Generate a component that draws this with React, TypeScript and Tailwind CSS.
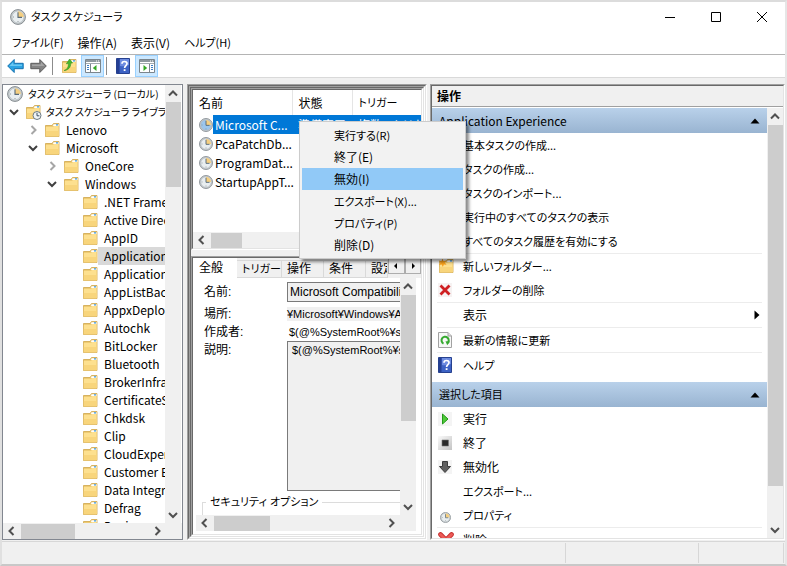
import type { ReactNode } from "react";
import clsx from "clsx";

type Direction = "up" | "down" | "left" | "right";

const chevrons: Record<Direction, string> = {
  up: "M1 6.5 5 2.5 9 6.5",
  down: "M1 3 5 7 9 3",
  left: "M6.5 1 2.5 5 6.5 9",
  right: "M3.5 1 7.5 5 3.5 9",
};

const textSize = (label: string) => (/[ぁ-ヶ]/.test(label) ? "text-[11px]" : "text-xs");

const Chevron = ({ dir, color = "#505050" }: { dir: Direction; color?: string }) => (
  <svg width="10" height="10" viewBox="0 0 10 10" fill="none" stroke={color} strokeWidth="2">
    <path d={chevrons[dir]} />
  </svg>
);

const ClockIcon = ({ size = 16, tint = "#e9eef0" }: { size?: number; tint?: string }) => (
  <svg width={size} height={size} viewBox="0 0 16 16" className="shrink-0">
    <circle cx="8" cy="8" r="7.4" fill="#c9ced1" stroke="#858c90" strokeWidth="1" />
    <circle cx="8" cy="8" r="5.9" fill={tint} stroke="#a9b2b7" strokeWidth="0.5" />
    <path d="M8 8V2.2A5.8 5.8 0 0 1 13.8 8Z" fill="#f5cf81" />
    <path d="M8 3.2V8.4H12" fill="none" stroke="#5a6b78" strokeWidth="1.1" />
    <path d="M3 8h1M8 12v1" stroke="#7d868b" strokeWidth="0.8" />
  </svg>
);

const FolderShape = () => (
  <>
    <path d="M1.5 14.5V3.5H8L9.5 1.5H15V14.5Z" fill="#e9c46a" stroke="#cfa64a" strokeWidth="0.8" />
    <path d="M9.5 2.3H14.6V4H9Z" fill="#fff" />
    <path d="M12 2.3H14V3.4H12Z" fill="#3a97dd" />
    <path d="M1.8 4.8H9L10 4.1H14.7V14.2H1.8Z" fill="#fde08f" />
    <path d="M1.8 9H14.7V14.2H1.8Z" fill="#f8d57c" />
  </>
);

const FolderIcon = () => (
  <svg width="16" height="16" viewBox="0 0 16 16" className="shrink-0">
    <FolderShape />
  </svg>
);

const ClockFolderIcon = () => (
  <svg width="16" height="16" viewBox="0 0 16 16" className="shrink-0 overflow-visible">
    <FolderShape />
    <circle cx="12" cy="11.5" r="4" fill="#eef3f5" stroke="#6c7a84" />
    <path d="M12 8.8V11.8H14.4" fill="none" stroke="#3f5263" />
  </svg>
);

const NewFolderIcon = () => (
  <svg width="16" height="16" viewBox="0 0 16 16">
    <FolderShape />
    <path
      d="M4.5.5 5.5 3 8.2 2.4 6.8 4.6 8.6 6.7 5.9 6.5 4.8 9 3.7 6.6 1 7 2.5 4.8 .8 2.6 3.5 3Z"
      fill="#f9a11b"
    />
  </svg>
);

const UpFolderIcon = () => (
  <svg width="16" height="16" viewBox="0 0 16 16">
    <FolderShape />
    <path
      d="M3 12.5C6.3 11.5 7.5 9 7.4 5.5L5.3 5.8 8.6 1 11.6 5 9.7 5.2C10 9.5 7 12.4 3 12.5Z"
      fill="#46b82e"
      stroke="#2c8a1c"
      strokeWidth="0.5"
    />
  </svg>
);

const ArrowIcon = ({ forward = false }: { forward?: boolean }) => (
  <svg width="17" height="16" viewBox="0 0 17 16">
    <path
      d={
        forward
          ? "M16.3 8 9.8 1.5V5.3H.8V10.7H9.8V14.5Z"
          : "M.7 8 7.2 1.5V5.3H16.2V10.7H7.2V14.5Z"
      }
      fill={forward ? "#858585" : "#2ba3e3"}
      stroke={forward ? "#5c5c5c" : "#1470ae"}
      strokeWidth="1"
      strokeLinejoin="round"
    />
    <path
      d={forward ? "M2 6.5H11V4L14.5 8H2Z" : "M2.5 8 6.2 4.2V6.5H15V8Z"}
      fill={forward ? "#a5a5a5" : "#6bc8f3"}
    />
  </svg>
);

const HelpIcon = () => (
  <svg width="14" height="16" viewBox="0 0 14 16">
    <path d="M.5.5H13.5V15.5H.5Z" fill="#3d62c4" stroke="#26418f" />
    <path d="M1 1H3.5V15H1Z" fill="#243f93" />
    <path d="M4 1H13V7Q8 9 4 8Z" fill="#6d8be0" />
    <path
      d="M6 5.8C6 2.8 11 2.8 11 5.6 11 7.6 8.6 7.6 8.6 10"
      fill="none"
      stroke="#fff"
      strokeWidth="1.7"
    />
    <path d="M7.7 11.2H9.5V13H7.7Z" fill="#fff" />
  </svg>
);

const PaneIcon = ({ side }: { side: "left" | "right" }) => (
  <svg width="16" height="14" viewBox="0 0 16 14">
    <path d="M.5.5H15.5V13.5H.5Z" fill="#fff" stroke="#7b858c" />
    <path d="M1 1H15V3H1Z" fill="#8f999f" />
    <path d="M11 1.5H12V2.5H11ZM13 1.5H14V2.5H13Z" fill="#fff" />
    <path d="M1 4.5H15" stroke="#a3abb0" />
    {side === "left" ? (
      <>
        <path d="M5.5 5V13" stroke="#7b858c" />
        <path d="M2 6.5H4M2 8.5H4M2 10.5H4" stroke="#3c7fc6" />
        <path d="M11.5 6V12L7.8 9Z" fill="#35a825" />
      </>
    ) : (
      <>
        <path d="M10.5 5V13" stroke="#7b858c" />
        <path d="M12 6.5H14M12 8.5H14M12 10.5H14" stroke="#3c7fc6" />
        <path d="M4.5 6V12L8.2 9Z" fill="#35a825" />
      </>
    )}
  </svg>
);

const DeleteIcon = () => (
  <svg width="14" height="14" viewBox="0 0 14 14">
    <path d="M0 0H14V14H0Z" fill="#f6f2f2" />
    <path d="M2.5 2.5 11.5 11.5M11.5 2.5 2.5 11.5" stroke="#cf1f22" strokeWidth="2.8" />
  </svg>
);

const BigDeleteIcon = () => (
  <svg width="16" height="16" viewBox="0 0 16 16">
    <path
      d="M2.5 2.5 13.5 13.5M13.5 2.5 2.5 13.5"
      stroke="#c22a2a"
      strokeWidth="4.6"
      strokeLinecap="round"
    />
    <path
      d="M2.5 2.5 13.5 13.5M13.5 2.5 2.5 13.5"
      stroke="#ec5a56"
      strokeWidth="3"
      strokeLinecap="round"
    />
  </svg>
);

const RefreshIcon = () => (
  <svg width="14" height="16" viewBox="0 0 14 16">
    <path d="M.5.5H10L13.5 4V15.5H.5Z" fill="#f7f7f7" stroke="#a2a2a2" />
    <path d="M10 .5V4H13.5" fill="#ddd" stroke="#a2a2a2" />
    <path
      d="M5.5 11.6A3.6 3.6 0 1 1 9.6 11"
      fill="none"
      stroke="#35a92f"
      strokeWidth="2"
    />
    <path d="M7.5 9.2 12 9.6 9.2 13.2Z" fill="#35a92f" />
  </svg>
);

const RunIcon = () => (
  <svg width="14" height="14" viewBox="0 0 14 14">
    <path d="M0 0H14V14H0Z" fill="#f4f4f4" />
    <path d="M4.5 2 10 7 4.5 12Z" fill="#4fc93a" stroke="#239a18" />
  </svg>
);

const EndIcon = () => (
  <svg width="14" height="14" viewBox="0 0 14 14">
    <defs>
      <linearGradient id="end" x1="0" y1="0" x2="1" y2="1">
        <stop offset="0" stopColor="#fafafa" />
        <stop offset="1" stopColor="#c4c4c4" />
      </linearGradient>
    </defs>
    <path d="M0 0H14V14H0Z" fill="url(#end)" />
    <path d="M4 4H10.5V10H4Z" fill="#2b2b2b" stroke="#777" strokeWidth="0.6" />
  </svg>
);

const DisableIcon = () => (
  <svg width="14" height="14" viewBox="0 0 14 14">
    <path d="M0 0H14V14H0Z" fill="#f4f4f4" />
    <path d="M4.5 1.5H9.5V6.5H12.5L7 12.5 1.5 6.5H4.5Z" fill="#606060" stroke="#3c3c3c" />
  </svg>
);

const VerticalScrollbar = ({ thumb, className }: { thumb: string; className?: string }) => (
  <div className={clsx("flex w-4 shrink-0 flex-col items-center bg-[#f0f0f0]", className)}>
    <div className="flex h-[17px] shrink-0 items-center">
      <Chevron dir="up" />
    </div>
    <div className={clsx("w-[15px] bg-[#cdcdcd]", thumb)} />
    <div className="mt-auto flex h-[17px] shrink-0 items-center">
      <Chevron dir="down" />
    </div>
  </div>
);

const HorizontalScrollbar = ({ thumb, className }: { thumb: string; className?: string }) => (
  <div className={clsx("flex h-4 shrink-0 items-center bg-[#f0f0f0]", className)}>
    <div className="flex w-[18px] shrink-0 justify-center">
      <Chevron dir="left" />
    </div>
    <div className={clsx("h-[15px] bg-[#cdcdcd]", thumb)} />
    <div className="ml-auto flex w-[18px] shrink-0 justify-center">
      <Chevron dir="right" />
    </div>
  </div>
);

// Two pixel sunken edge, dark on the top left and light on the bottom right
const Sunken = ({ children, className }: { children: ReactNode; className?: string }) => (
  <div
    className={clsx(
      "flex min-h-0 flex-col border border-t-[#a0a0a0] border-r-white border-b-white border-l-[#a0a0a0]",
      className,
    )}
  >
    <div className="flex min-h-0 grow flex-col border border-t-[#696969] border-r-[#e3e3e3] border-b-[#e3e3e3] border-l-[#696969]">
      {children}
    </div>
  </div>
);

interface TreeNode {
  label: string;
  level: number;
  open?: boolean;
  icon?: "clock" | "library";
  selected?: boolean;
}

const leaves = [
  ".NET Framework",
  "Active Directory",
  "AppID",
  "Application Experience",
  "ApplicationData",
  "AppListBackup",
  "AppxDeployment",
  "Autochk",
  "BitLocker",
  "Bluetooth",
  "BrokerInfrastructure",
  "CertificateServices",
  "Chkdsk",
  "Clip",
  "CloudExperience",
  "Customer Experience",
  "Data Integrity Scan",
  "Defrag",
  "Device",
];

const tree: TreeNode[] = [
  { label: "タスク スケジューラ (ローカル)", level: 0, icon: "clock" },
  { label: "タスク スケジューラ ライブラリ", level: 1, open: true, icon: "library" },
  { label: "Lenovo", level: 2, open: false },
  { label: "Microsoft", level: 2, open: true },
  { label: "OneCore", level: 3, open: false },
  { label: "Windows", level: 3, open: true },
  ...leaves.map((label) => ({
    label,
    level: 4,
    selected: label === "Application Experience",
  })),
];

const indents = ["pl-1", "pl-[5px]", "pl-[24px]", "pl-[43px]", "pl-[79px]"];

const TreePanel = () => (
  <div className="flex w-[181px] shrink-0 flex-col border border-[#828790] bg-white">
    <div className="flex min-h-0 grow">
      <ul className="min-w-0 grow overflow-hidden">
        {tree.map((node) => (
          <li key={node.label} className={clsx("flex h-[18px] items-center", indents[node.level])}>
            {node.open !== undefined && (
              <span className="flex w-[17px] shrink-0 items-center pl-px">
                <Chevron
                  dir={node.open ? "down" : "right"}
                  color={node.open ? "#404040" : "#a6a6a6"}
                />
              </span>
            )}
            {node.icon === "clock" && <ClockIcon />}
            {node.icon === "library" && <ClockFolderIcon />}
            {!node.icon && <FolderIcon />}
            <span
              className={clsx(
                "grow leading-[18px] whitespace-nowrap",
                node.icon ? "pl-[5px] text-[10px]" : "pl-[6px]",
                node.selected && "bg-[#d9d9d9]",
              )}
            >
              {node.label}
            </span>
          </li>
        ))}
      </ul>
      <VerticalScrollbar thumb="h-[85px]" className="mr-px" />
    </div>
    <HorizontalScrollbar thumb="w-[54px]" className="pr-4" />
  </div>
);

const tasks = ["Microsoft C...", "PcaPatchDb...", "ProgramDat...", "StartupAppT..."];

const TaskList = () => (
  <Sunken className="h-[162px] shrink-0 bg-white">
    <div className="grow overflow-hidden">
      <table className="w-full table-fixed border-collapse whitespace-nowrap">
        <thead>
          <tr className="h-[25px] text-left">
            <th className="w-[99px] border-r border-[#e5e5e5] p-0 pl-[6px] font-normal">名前</th>
            <th className="w-[60px] border-r border-[#e5e5e5] p-0 pl-[6px] font-normal">状態</th>
            <th className="p-0 pl-[6px] text-[11px] font-normal">トリガー</th>
          </tr>
        </thead>
        <tbody>
          {tasks.map((task, i) => (
            <tr key={task} className={clsx("h-[19px]", i === 0 && "text-white")}>
              <td className="p-0 pl-[6px]">
                <div className="flex h-[19px] items-center">
                  <ClockIcon size={14} tint={i === 0 ? "#9cc6ec" : undefined} />
                  <span className={clsx("grow pl-[2px] leading-[19px]", i === 0 && "bg-[#0078d7]")}>
                    {task}
                  </span>
                </div>
              </td>
              <td className={clsx("p-0 pl-[6px]", i === 0 && "bg-[#0078d7]")}>
                {i === 0 && "準備完了"}
              </td>
              <td className={clsx("overflow-hidden p-0 pl-[6px]", i === 0 && "bg-[#0078d7]")}>
                {i === 0 && "複数のトリガー"}
              </td>
            </tr>
          ))}
        </tbody>
      </table>
    </div>
    <HorizontalScrollbar thumb="w-[31px]" />
  </Sunken>
);

const tabs = [
  { label: "トリガー", width: "w-[45px]" },
  { label: "操作", width: "w-[42px]" },
  { label: "条件", width: "w-[42px]" },
  { label: "設定", width: "w-[22px]" },
];

const TaskDetails = () => (
  <Sunken className="grow bg-white font-['Liberation_Sans','Noto_Sans_CJK_JP',sans-serif]">
    <div className="flex h-5 shrink-0 items-end bg-[#f0f0f0]">
      <button className="h-5 w-11 bg-white pl-[6px] text-left leading-4">全般</button>
      {tabs.map((tab) => (
        <button
          key={tab.label}
          className={clsx(
            "h-[18px] overflow-hidden border-t border-r border-b border-[#d9d9d9] pl-[5px] text-left leading-4 whitespace-nowrap",
            tab.width,
            textSize(tab.label),
          )}
        >
          {tab.label}
        </button>
      ))}
      <div className="flex h-full grow">
        {["M5 1V7L2 4Z", "M3 1V7L6 4Z"].map((d, i) => (
          <button
            key={d}
            aria-label={i === 0 ? "前のタブ" : "次のタブ"}
            className="flex h-4 grow items-center justify-center border border-[#adadad] bg-[#f0f0f0]"
          >
            <svg width="8" height="8" viewBox="0 0 8 8">
              <path d={d} />
            </svg>
          </button>
        ))}
      </div>
    </div>
    <div className="mr-[5px] mb-[3px] ml-[3px] flex min-h-0 grow flex-col">
      <div className="flex min-h-0 grow">
        <div className="flex min-w-0 grow flex-col overflow-hidden pl-2 whitespace-nowrap">
          <div className="grid grid-cols-[83px_140px] pt-1">
            <label htmlFor="task-name" className="pt-px leading-[18px]">
              名前:
            </label>
            <input
              id="task-name"
              readOnly
              value="Microsoft Compatibility Appraiser"
              className="mb-[3px] h-5 border border-[#7a7a7a] bg-[#f0f0f0] px-[2px]"
            />
            <span className="leading-[18px]">場所:</span>
            <span className="self-center bg-[#f0f0f0] text-[11px] leading-[14px]">
              ¥Microsoft¥Windows¥Application
            </span>
            <span className="leading-[18px]">作成者:</span>
            <span className="pl-[2px] text-[11px] leading-[18px]">$(@%SystemRoot%¥system32</span>
            <label htmlFor="task-description" className="leading-[18px]">
              説明:
            </label>
            <textarea
              id="task-description"
              readOnly
              value="$(@%SystemRoot%¥system32"
              className="h-[150px] resize-none overflow-hidden border border-[#7a7a7a] bg-[#f0f0f0] px-1 text-[11px] leading-4 whitespace-pre"
            />
          </div>
          <fieldset className="-ml-[2px] mt-[2px] h-9 w-[300px] shrink-0 border border-[#dcdcdc] pl-[3px]">
            <legend className="px-1 text-[11px] leading-[18px]">セキュリティ オプション</legend>
          </fieldset>
        </div>
        <VerticalScrollbar thumb="h-[126px]" />
      </div>
      <HorizontalScrollbar thumb="w-14" className="pr-4" />
    </div>
  </Sunken>
);

const ActionHeader = ({ title }: { title: string }) => (
  <div className="flex h-[25px] items-center justify-between bg-linear-to-b from-[#b9d1ea] to-[#99b4d1] px-[7px]">
    <span className={textSize(title)}>{title}</span>
    <svg width="10" height="6" viewBox="0 0 10 6">
      <path d="M5 .5 9.5 5.5H.5Z" />
    </svg>
  </div>
);

interface ActionItem {
  label: string;
  icon?: ReactNode;
  submenu?: boolean;
}

const ActionGroup = ({ items }: { items: ActionItem[] }) => (
  <div className="mx-[5px] border-b border-[#ececec] last:border-b-0">
    {items.map(({ label, icon, submenu }) => (
      <button
        key={label}
        className={clsx(
          "flex h-6 w-full items-center pr-[2px] text-left whitespace-nowrap",
          textSize(label),
        )}
      >
        <span className="flex w-[26px] shrink-0 pl-px">{icon}</span>
        {label}
        {submenu && (
          <svg width="6" height="10" viewBox="0 0 6 10" className="ml-auto">
            <path d="M.5.5 5.5 5 .5 9.5Z" />
          </svg>
        )}
      </button>
    ))}
  </div>
);

const folderActions: ActionItem[][] = [
  [
    { label: "基本タスクの作成..." },
    { label: "タスクの作成..." },
    { label: "タスクのインポート..." },
    { label: "実行中のすべてのタスクの表示" },
    { label: "すべてのタスク履歴を有効にする" },
  ],
  [
    { label: "新しいフォルダー...", icon: <NewFolderIcon /> },
    { label: "フォルダーの削除", icon: <DeleteIcon /> },
  ],
  [{ label: "表示", submenu: true }],
  [{ label: "最新の情報に更新", icon: <RefreshIcon /> }],
  [{ label: "ヘルプ", icon: <HelpIcon /> }],
];

const itemActions: ActionItem[][] = [
  [
    { label: "実行", icon: <RunIcon /> },
    { label: "終了", icon: <EndIcon /> },
    { label: "無効化", icon: <DisableIcon /> },
    { label: "エクスポート..." },
    {
      label: "プロパティ",
      icon: (
        <span className="pt-1 pl-[2px]">
          <ClockIcon size={11} />
        </span>
      ),
    },
  ],
  [{ label: "削除", icon: <BigDeleteIcon /> }],
];

const ActionsPanel = () => (
  <Sunken className="min-w-0 grow bg-white">
    <h2 className="h-[21px] shrink-0 border-b border-[#a0a0a0] bg-[#f0f0f0] pl-[5px] leading-5 font-bold">
      操作
    </h2>
    <div className="flex min-h-0 grow pt-px">
      <div className="min-w-0 grow overflow-hidden">
        <ActionHeader title="Application Experience" />
        <div className="mb-[5px]">
          {folderActions.map((items) => (
            <ActionGroup key={items[0].label} items={items} />
          ))}
        </div>
        <ActionHeader title="選択した項目" />
        {itemActions.map((items) => (
          <ActionGroup key={items[0].label} items={items} />
        ))}
      </div>
      <VerticalScrollbar thumb="h-[361px]" />
    </div>
  </Sunken>
);

const contextItems = [
  "実行する(R)",
  "終了(E)",
  "無効(I)",
  "エクスポート(X)...",
  "プロパティ(P)",
  "削除(D)",
];

const ContextMenu = () => (
  <div
    role="menu"
    className="absolute top-[119px] left-[297px] w-[167px] border border-[#cccccc] bg-[#f2f2f2] p-[2px] shadow-[3px_3px_3px_rgba(0,0,0,0.45)]"
  >
    {contextItems.map((item) => (
      <button
        key={item}
        role="menuitem"
        className={clsx(
          "block h-[22px] w-full pl-8 text-left",
          textSize(item),
          item === "無効(I)" && "bg-[#91c9f7]",
        )}
      >
        {item}
      </button>
    ))}
  </div>
);

const Toolbar = () => (
  <div className="flex h-[23px] items-center border-b border-[#d9d9d9] bg-white pl-[5px]">
    <button aria-label="戻る">
      <ArrowIcon />
    </button>
    <button aria-label="進む" className="ml-[6px]">
      <ArrowIcon forward />
    </button>
    <div className="ml-[5px] h-[18px] w-px bg-[#8c8c8c]" />
    <button aria-label="上へ" className="ml-2">
      <UpFolderIcon />
    </button>
    <button
      aria-label="コンソール ツリー"
      className="ml-1 flex h-[22px] w-[23px] items-center justify-center border border-[#99d1ff] bg-[#cce8ff]"
    >
      <PaneIcon side="left" />
    </button>
    <div className="ml-[2px] h-[18px] w-px bg-[#8c8c8c]" />
    <button aria-label="ヘルプ" className="ml-[9px]">
      <HelpIcon />
    </button>
    <button
      aria-label="操作ウィンドウ"
      className="ml-[5px] flex h-[22px] w-[23px] items-center justify-center border border-[#99d1ff] bg-[#cce8ff]"
    >
      <PaneIcon side="right" />
    </button>
  </div>
);

const App = () => {
  return (
    <div className="relative flex h-screen flex-col overflow-hidden border-2 border-t-[#dcdcdc] border-r-[#e6e6e6] border-b-[#c8c8c8] border-l-[#e0e0e0] bg-[#f0f0f0] font-['Noto_Sans_CJK_JP',sans-serif] text-xs text-black [font-feature-settings:'palt','kern']">
      <header className="flex h-[29px] shrink-0 items-center bg-white pl-2">
        <ClockIcon />
        <h1 className="ml-[5px] text-[11px]">タスク スケジューラ</h1>
        <div className="ml-auto flex">
          {["M0 5.5H10", "M.5.5H9.5V9.5H.5Z", "M0 0 10 10M10 0 0 10"].map((d, i) => (
            <button
              key={d}
              aria-label={["最小化", "最大化", "閉じる"][i]}
              className="flex h-7 w-[46px] items-center justify-center"
            >
              <svg width="10" height="10" viewBox="0 0 10 10" fill="none" stroke="#000">
                <path d={d} />
              </svg>
            </button>
          ))}
        </div>
      </header>
      <nav className="flex h-6 shrink-0 items-center gap-[14px] border-b border-[#b4b4b4] bg-white pl-[10px]">
        {["ファイル(F)", "操作(A)", "表示(V)", "ヘルプ(H)"].map((item) => (
          <button key={item} className={textSize(item)}>
            {item}
          </button>
        ))}
      </nav>
      <Toolbar />
      <main className="flex min-h-0 grow pt-[6px]">
        <TreePanel />
        <Sunken className="ml-1 w-[240px] shrink-0">
          <Sunken className="grow">
            <TaskList />
            <div className="h-[6px] shrink-0" />
            <TaskDetails />
          </Sunken>
        </Sunken>
        <div className="w-[3px] shrink-0" />
        <ActionsPanel />
      </main>
      <footer className="mt-px flex h-[23px] shrink-0 border-t border-[#d7d7d7] py-px">
        <div className="grow border-r border-[#d7d7d7]" />
        <div className="w-[133px] border-r border-[#d7d7d7]" />
        <div className="mr-px w-[85px] border-r border-[#d7d7d7]" />
      </footer>
      <ContextMenu />
    </div>
  );
};

export default App;
